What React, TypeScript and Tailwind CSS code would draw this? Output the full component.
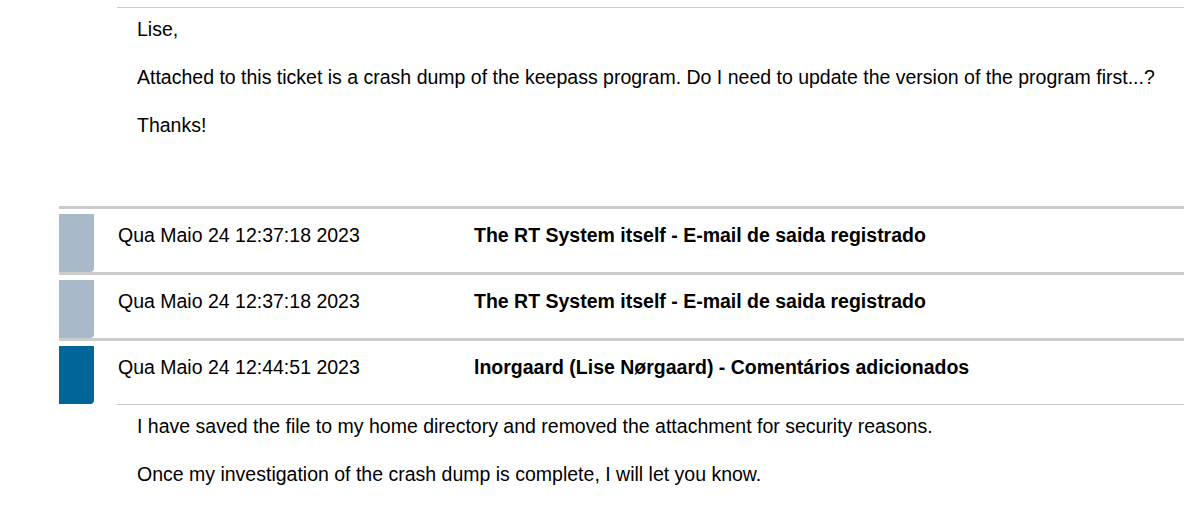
const font = { fontFamily: '"Liberation Sans", Arial, sans-serif' };

interface Txn {
  date: string;
  title: string;
  color: string;
  body?: string[];
}

const txns: Txn[] = [
  { date: 'Qua Maio 24 12:37:18 2023', title: 'The RT System itself - E-mail de saida registrado', color: 'bg-[#a8b9ca]' },
  { date: 'Qua Maio 24 12:37:18 2023', title: 'The RT System itself - E-mail de saida registrado', color: 'bg-[#a8b9ca]' },
  {
    date: 'Qua Maio 24 12:44:51 2023',
    title: 'lnorgaard (Lise Nørgaard) - Comentários adicionados',
    color: 'bg-[#01659a]',
    body: [
      'I have saved the file to my home directory and removed the attachment for security reasons.',
      'Once my investigation of the crash dump is complete, I will let you know.',
    ],
  },
];

function Body({ lines }: { lines: string[] }) {
  return (
    <div className="ml-[58px] border-t border-[#cccccc] pl-5 pt-[9px]">
      {lines.map((l, i) => (
        <p key={i} className="mb-6 text-[19.5px] leading-6 text-black">
          {l}
        </p>
      ))}
    </div>
  );
}

export default function App() {
  return (
    <div className="h-[510px] w-[1184px] overflow-hidden bg-white pl-[59px] pt-[7px]" style={font}>
      <div className="pb-[45px]">
        <Body lines={['Lise,', 'Attached to this ticket is a crash dump of the keepass program. Do I need to update the version of the program first...?', 'Thanks!']} />
      </div>
      {txns.map((t, i) => (
        <div key={i} className="border-t-[3px] border-[#cccccc] pt-[5px]">
          <div className="flex h-[58px]">
            <div className={`w-[35px] shrink-0 rounded-br-[4px] ${t.color}`} />
            <div className="flex pt-[9px] text-[19.5px] leading-6 text-black">
              <span className="ml-[24px] w-[356px]">{t.date}</span>
              <span className="font-bold">{t.title}</span>
            </div>
          </div>
          {t.body && <Body lines={t.body} />}
        </div>
      ))}
    </div>
  );
}
